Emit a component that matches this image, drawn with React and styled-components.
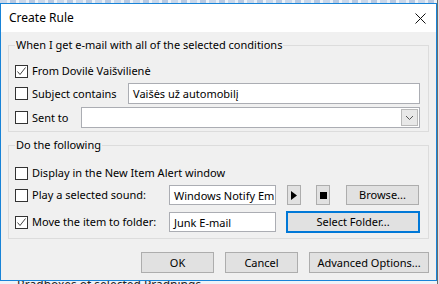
import React from 'react';
import styled, { createGlobalStyle } from 'styled-components';

const Global = createGlobalStyle`
  html, body { margin: 0; padding: 0; }
  body {
    width: 439px;
    height: 284px;
    overflow: hidden;
    background: #eef2f7;
    font-family: "Noto Sans", "Open Sans", sans-serif;
    font-size: 11px;
    color: #000;
  }
`;

const Desk = styled.div`
  display: flex;
  width: 439px;
  height: 284px;
`;

const Column = styled.div`
  display: flex;
  flex-direction: column;
  width: 437px;
`;

const TopStrip = styled.div`
  height: 3px;
  background: repeating-linear-gradient(90deg, #c9d7ea 0 7px, #e9eef5 7px 10px, #b7c9e2 10px 16px, #eef2f7 16px 19px);
`;

const BottomStrip = styled.div`
  height: 3px;
  overflow: hidden;
  color: #222;
  font-size: 12px;
  line-height: 12px;
  white-space: nowrap;
  padding-left: 17px;
`;

const BottomText = styled.div`
  margin-top: -2px;
`;

const SideStrip = styled.div`
  width: 2px;
  border-left: 1px solid #6b6b6b;
  background: #dfe4ea;
`;

const Dialog = styled.div`
  border: 1px solid #1883d7;
  display: flex;
  flex-direction: column;
  background: #f0f0f0;
`;

const TitleBar = styled.div`
  height: 28px;
  background: #fff;
  display: flex;
  align-items: center;
  justify-content: space-between;
  padding: 0 10px 0 8px;
`;

const Title = styled.span`
  font-size: 12px;
  line-height: 16px;
`;

const Body = styled.div`
  display: flex;
  flex-direction: column;
  padding: 5px 7px 7px 7px;
  height: 248px;
  box-sizing: border-box;
`;

const Group = styled.fieldset`
  margin: ${p => p.$top || 0}px 0 0 0;
  border: 1px solid #dcdcdc;
  padding: ${p => p.$pt}px 8px ${p => p.$pb}px 6px;
  display: flex;
  flex-direction: column;
  min-width: 0;
`;

const Legend = styled.legend`
  padding: 0 1px;
  line-height: 16px;
`;

const Row = styled.div`
  display: flex;
  align-items: center;
  height: ${p => p.$h}px;
  margin-top: ${p => p.$gap || 0}px;
`;

const CheckLabel = styled.label`
  display: flex;
  align-items: center;
  gap: 4px;
  width: ${p => (p.$w ? `${p.$w}px` : 'auto')};
  flex: none;
  white-space: nowrap;
  line-height: 16px;
`;

const Box = styled.span`
  width: 11px;
  height: 11px;
  border: 1px solid #333;
  background: #fff;
  display: inline-flex;
  align-items: center;
  justify-content: center;
  flex: none;
`;

const Input = styled.div`
  height: ${p => p.$h || 21}px;
  box-sizing: border-box;
  border: 1px solid #abadb3;
  background: #fff;
  display: flex;
  align-items: center;
  padding: 0 4px;
  overflow: hidden;
  white-space: nowrap;
  width: ${p => (p.$w ? `${p.$w}px` : 'auto')};
  flex: ${p => (p.$w ? 'none' : '1')};
`;

const Combo = styled(Input)`
  padding: 0 1px 0 4px;
  justify-content: flex-end;
`;

const DropButton = styled.span`
  width: 17px;
  height: 17px;
  box-sizing: border-box;
  border: 1px solid #b9b9b9;
  background: #e8e8e8;
  display: flex;
  align-items: center;
  justify-content: center;
`;

const Button = styled.button`
  font: inherit;
  color: #000;
  height: ${p => p.$h || 21}px;
  width: ${p => p.$w}px;
  margin-left: ${p => p.$ml || 0}px;
  box-sizing: border-box;
  background: #e1e1e1;
  border: ${p => (p.$focus ? '2px solid #0078d7' : '1px solid #adadad')};
  padding: 0;
  display: flex;
  align-items: center;
  justify-content: center;
  flex: none;
  line-height: 16px;
`;

const Footer = styled.div`
  display: flex;
  justify-content: flex-end;
  gap: 11px;
  margin-top: 13px;
`;

const Check = () => (
  <svg width="11" height="11" viewBox="0 0 11 11">
    <polyline points="1.5,5.5 4,8.5 9.5,1.5" fill="none" stroke="#444" strokeWidth="1" />
  </svg>
);

const CheckBox = ({ checked }) => <Box>{checked && <Check />}</Box>;

const CloseIcon = () => (
  <svg width="11" height="11" viewBox="0 0 11 11">
    <path d="M0.5 0.5 L10.5 10.5 M10.5 0.5 L0.5 10.5" stroke="#111" strokeWidth="1" />
  </svg>
);

const Chevron = () => (
  <svg width="9" height="6" viewBox="0 0 9 6">
    <polyline points="1,1 4.5,4.5 8,1" fill="none" stroke="#555" strokeWidth="1" />
  </svg>
);

const Play = () => (
  <svg width="6" height="9" viewBox="0 0 6 9">
    <polygon points="0,0 6,4.5 0,9" fill="#000" />
  </svg>
);

const Stop = () => (
  <svg width="7" height="7" viewBox="0 0 7 7">
    <rect width="7" height="7" fill="#000" />
  </svg>
);

export default function App() {
  return (
    <Desk>
      <Global />
      <Column>
        <TopStrip />
        <Dialog>
          <TitleBar>
            <Title>Create Rule</Title>
            <CloseIcon />
          </TitleBar>
          <Body>
            <Group $pt={8} $pb={3}>
              <Legend>When I get e-mail with all of the selected conditions</Legend>
              <Row $h={20}>
                <CheckLabel>
                  <CheckBox checked />
                  From Dovilė Vaišvilienė
                </CheckLabel>
              </Row>
              <Row $h={21} $gap={2}>
                <CheckLabel $w={113}>
                  <CheckBox />
                  Subject contains
                </CheckLabel>
                <Input>Vaišės už automobilį</Input>
              </Row>
              <Row $h={21} $gap={3}>
                <CheckLabel $w={66}>
                  <CheckBox />
                  Sent to
                </CheckLabel>
                <Combo>
                  <DropButton>
                    <Chevron />
                  </DropButton>
                </Combo>
              </Row>
            </Group>
            <Group $top={5} $pt={10} $pb={5}>
              <Legend>Do the following</Legend>
              <Row $h={20}>
                <CheckLabel>
                  <CheckBox />
                  Display in the New Item Alert window
                </CheckLabel>
              </Row>
              <Row $h={20} $gap={2}>
                <CheckLabel $w={154}>
                  <CheckBox />
                  Play a selected sound:
                </CheckLabel>
                <Input $w={107} $h={20}>Windows Notify Em</Input>
                <Button $w={14} $h={20} $ml={11}>
                  <Play />
                </Button>
                <Button $w={14} $h={20} $ml={15}>
                  <Stop />
                </Button>
                <Button $w={73} $h={20} $ml={16}>
                  Browse...
                </Button>
              </Row>
              <Row $h={22} $gap={6}>
                <CheckLabel $w={154}>
                  <CheckBox checked />
                  Move the item to folder:
                </CheckLabel>
                <Input $w={107} $h={20}>Junk E-mail</Input>
                <Button $w={134} $h={22} $ml={10} $focus>
                  Select Folder...
                </Button>
              </Row>
            </Group>
            <Footer>
              <Button $w={73}>OK</Button>
              <Button $w={73}>Cancel</Button>
              <Button $w={120}>Advanced Options...</Button>
            </Footer>
          </Body>
        </Dialog>
        <BottomStrip>
          <BottomText>Bradboxes of selected Pradnings</BottomText>
        </BottomStrip>
      </Column>
      <SideStrip />
    </Desk>
  );
}
